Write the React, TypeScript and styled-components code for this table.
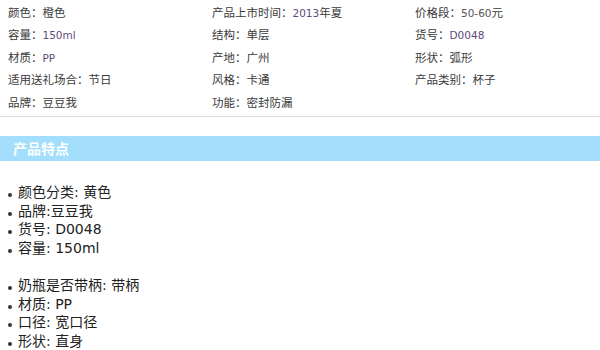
import React from "react";
import styled, { createGlobalStyle } from "styled-components";

const Global = createGlobalStyle`
  html, body { margin: 0; padding: 0; background: #fff; }
  body { font-family: "Noto Sans CJK SC", "Noto Sans", sans-serif; }
`;

const Page = styled.div`
  width: 600px;
  height: 350px;
  overflow: hidden;
  background: #fff;
`;

const AttrGrid = styled.ul`
  list-style: none;
  margin: 0;
  padding: 1px 0 0 8px;
  display: grid;
  grid-template-columns: 204px 203px 1fr;
  grid-auto-rows: 22.4px;
  border-bottom: 1px solid #dcdcdc;
  padding-bottom: 3px;
`;

const Attr = styled.li`
  font-size: 11.5px;
  line-height: 22.4px;
  color: #3a3a3a;
  white-space: nowrap;
`;

const Latin = styled.span<{ $tone?: "purple" | "grey" }>`
  font-family: "DejaVu Sans", "Liberation Sans", sans-serif;
  font-size: 10.5px;
  color: ${(p) => (p.$tone === "grey" ? "#555" : "#5e4a78")};
`;

const SectionBar = styled.h3`
  margin: 19px 0 0;
  height: 25px;
  background: #a3dffc;
  color: #fff;
  font-size: 14px;
  font-weight: 600;
  line-height: 25px;
  padding-left: 13px;
`;

const Features = styled.div`
  padding: 22px 0 0 8px;
`;

const FeatureList = styled.ul<{ $gapBelow?: boolean }>`
  list-style: none;
  margin: 0 0 ${(p) => (p.$gapBelow ? "18.7px" : "0")};
  padding: 0;
`;

const Feature = styled.li`
  position: relative;
  padding-left: 10px;
  font-size: 14px;
  line-height: 18.6px;
  color: #222;
  white-space: nowrap;
  font-family: "DejaVu Sans", "Noto Sans CJK SC", sans-serif;
  &::before {
    content: "";
    position: absolute;
    left: 0;
    top: 10px;
    width: 4px;
    height: 4px;
    border-radius: 50%;
    background: #333;
  }
`;

type Item = { label: string; value: React.ReactNode };

const attrs: Item[] = [
  { label: "颜色", value: "橙色" },
  { label: "产品上市时间", value: <><Latin>2013</Latin>年夏</> },
  { label: "价格段", value: <><Latin $tone="grey">50-60</Latin>元</> },
  { label: "容量", value: <Latin>150ml</Latin> },
  { label: "结构", value: "单层" },
  { label: "货号", value: <Latin>D0048</Latin> },
  { label: "材质", value: <Latin>PP</Latin> },
  { label: "产地", value: "广州" },
  { label: "形状", value: "弧形" },
  { label: "适用送礼场合", value: "节日" },
  { label: "风格", value: "卡通" },
  { label: "产品类别", value: "杯子" },
  { label: "品牌", value: "豆豆我" },
  { label: "功能", value: "密封防漏" },
];

const groupA = ["颜色分类: 黄色", "品牌:豆豆我", "货号: D0048", "容量: 150ml"];
const groupB = ["奶瓶是否带柄: 带柄", "材质: PP", "口径: 宽口径", "形状: 直身"];

export default function App() {
  return (
    <Page>
      <Global />
      <AttrGrid>
        {attrs.map((a) => (
          <Attr key={a.label}>
            {a.label}：{a.value}
          </Attr>
        ))}
      </AttrGrid>
      <SectionBar>产品特点</SectionBar>
      <Features>
        <FeatureList $gapBelow>
          {groupA.map((t) => (
            <Feature key={t}>{t}</Feature>
          ))}
        </FeatureList>
        <FeatureList>
          {groupB.map((t) => (
            <Feature key={t}>{t}</Feature>
          ))}
        </FeatureList>
      </Features>
    </Page>
  );
}
